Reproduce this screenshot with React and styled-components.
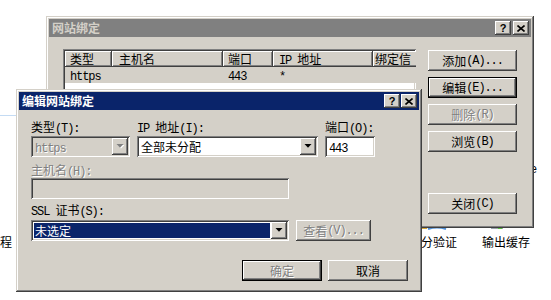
import React from "react";
import styled, { createGlobalStyle } from "styled-components";

const GlobalStyle = createGlobalStyle`
  html, body { margin: 0; padding: 0; background: #fff; }
  body {
    font-family: "Noto Sans CJK SC", "Liberation Sans", sans-serif;
    font-size: 12px;
    color: #000;
  }
`;

const raised =
  "inset -1px -1px #404040, inset 1px 1px #ffffff, inset -2px -2px #808080, inset 2px 2px #d4d0c8";
const sunken =
  "inset 1px 1px #808080, inset -1px -1px #ffffff, inset 2px 2px #404040, inset -2px -2px #d4d0c8";

const Desktop = styled.div`
  position: relative;
  width: 551px;
  height: 300px;
  overflow: hidden;
  background: #fff;
`;

const BgLabel = styled.div`
  position: absolute;
  left: ${p => p.$x}px;
  top: ${p => p.$y}px;
  font-size: 12px;
  line-height: 14px;
  white-space: nowrap;
`;

const BgRule = styled.div`
  position: absolute;
  left: 0;
  top: 115px;
  width: 16px;
  height: 1px;
  background: #c4dbf3;
`;

const BgIcon = styled.svg`
  position: absolute;
  left: ${p => p.$x}px;
  top: ${p => p.$y}px;
`;

const Window = styled.div`
  position: absolute;
  left: ${p => p.$x}px;
  top: ${p => p.$y}px;
  width: ${p => p.$w}px;
  height: ${p => p.$h}px;
  box-sizing: border-box;
  padding: 3px;
  background: #d4d0c8;
  box-shadow: inset -1px -1px #404040, inset 1px 1px #d4d0c8, inset -2px -2px #808080, inset 2px 2px #ffffff;
  display: flex;
  flex-direction: column;
  overflow: hidden;
`;

const TitleBar = styled.div`
  flex: none;
  height: 18px;
  display: flex;
  align-items: center;
  justify-content: space-between;
  padding: 0 2px 0 3px;
  background: ${p => (p.$active ? "#0a246a" : "#808080")};
  color: ${p => (p.$active ? "#ffffff" : "#d4d0c8")};
  font-weight: bold;
  font-size: 12px;
  line-height: 18px;
`;

const TitleButtons = styled.div`
  display: flex;
  gap: ${p => p.$gap}px;
`;

const TitleButton = styled.div`
  width: 16px;
  height: 14px;
  box-sizing: border-box;
  background: #d4d0c8;
  color: #000;
  box-shadow: ${raised};
  display: flex;
  align-items: center;
  justify-content: center;
  font-family: "Liberation Sans", sans-serif;
  font-weight: bold;
  font-size: 11px;
  line-height: 14px;
`;

/* back dialog */
const BackBody = styled.div`
  display: flex;
  padding: 12px 0 0 14px;
  gap: 12px;
`;

const ListView = styled.div`
  width: 353px;
  height: 170px;
  box-sizing: border-box;
  padding: 2px;
  background: #fff;
  box-shadow: ${sunken};
  overflow: hidden;
`;

const ListGrid = styled.div`
  display: grid;
  grid-template-columns: 47px 111px 50px 100px 100px;
  width: 408px;
`;

const HeaderCell = styled.div`
  height: 16px;
  box-sizing: border-box;
  padding-left: ${p => p.$pad}px;
  line-height: 16px;
  background: #d4d0c8;
  box-shadow: inset -1px -1px #404040, inset 1px 1px #ffffff, inset -2px -2px #808080;
  white-space: nowrap;
  overflow: hidden;
`;

const RowCell = styled.div`
  height: 16px;
  padding-left: ${p => p.$pad}px;
  line-height: 16px;
  background: #d4d0c8;
  white-space: nowrap;
`;

const ButtonColumn = styled.div`
  display: flex;
  flex-direction: column;
  gap: 6px;
  padding-top: 1px;
`;

const Button = styled.div`
  width: ${p => p.$w}px;
  height: 21px;
  flex: none;
  box-sizing: border-box;
  margin-top: ${p => p.$mt || 0}px;
  display: flex;
  align-items: center;
  justify-content: center;
  background: #d4d0c8;
  box-shadow: ${p =>
    p.$default
      ? "inset 0 0 0 1px #000, inset -2px -2px #404040, inset 2px 2px #ffffff, inset -3px -3px #808080"
      : raised};
  color: ${p => (p.$disabled ? "#808080" : "#000")};
  text-shadow: ${p => (p.$disabled ? "1px 1px #ffffff" : "none")};
  line-height: 14px;
  white-space: nowrap;
`;

/* front dialog */
const FrontBody = styled.div`
  display: flex;
  flex-direction: column;
  padding: 10px 11px 0 12px;
`;

const FieldRow = styled.div`
  display: flex;
  gap: 7px;
  margin-top: ${p => p.$mt || 0}px;
  align-items: flex-end;
`;

const Field = styled.div`
  display: flex;
  flex-direction: column;
  gap: ${p => p.$gap ?? 2}px;
`;

const Label = styled.div`
  height: 14px;
  line-height: 14px;
  white-space: nowrap;
  color: ${p => (p.$disabled ? "#808080" : "#000")};
  text-shadow: ${p => (p.$disabled ? "1px 1px #ffffff" : "none")};
`;

const Box = styled.div`
  width: ${p => p.$w}px;
  height: 21px;
  box-sizing: border-box;
  padding: 2px;
  display: flex;
  background: ${p => (p.$disabled ? "#d4d0c8" : "#fff")};
  box-shadow: ${sunken};
`;

const Value = styled.div`
  flex: 1;
  min-width: 0;
  padding: ${p => (p.$selected ? "1px" : "0 0 0 2px")};
  line-height: 17px;
  white-space: nowrap;
  overflow: hidden;
  color: ${p => (p.$disabled ? "#808080" : "#000")};
  text-shadow: ${p => (p.$disabled ? "1px 1px #ffffff" : "none")};
`;

const Selection = styled.div`
  height: 15px;
  line-height: 15px;
  padding-left: 1px;
  background: #0a246a;
  color: #fff;
`;

const DropButton = styled.div`
  width: 16px;
  height: 17px;
  flex: none;
  box-sizing: border-box;
  background: #d4d0c8;
  box-shadow: ${raised};
  display: flex;
  align-items: center;
  justify-content: center;
`;

const Actions = styled.div`
  display: flex;
  justify-content: flex-end;
  gap: 6px;
  margin-top: 19px;
`;

const Lat = styled.span`
  font-family: "Liberation Mono", monospace;
  font-size: 12px;
  letter-spacing: -1.1px;
`;

function Txt({ children }) {
  const parts = String(children).split(/([\u0000-\u00ff]+)/);
  return parts.map((p, i) =>
    p === "" ? null : /^[\u0000-\u00ff]+$/.test(p) ? (
      <Lat key={i}>{p}</Lat>
    ) : (
      <React.Fragment key={i}>{p}</React.Fragment>
    )
  );
}

const Arrow = ({ disabled }) => (
  <svg width="8" height="5" viewBox="0 0 8 5">
    {disabled && <polygon points="1.5,1 8.5,1 5,4.5" fill="#fff" />}
    <polygon points="0.5,0 7.5,0 4,3.8" fill={disabled ? "#808080" : "#000"} />
  </svg>
);

const CloseGlyph = () => (
  <svg width="8" height="7" viewBox="0 0 8 7">
    <path d="M0.5 0.5 L7.5 6.5 M7.5 0.5 L0.5 6.5" stroke="#000" strokeWidth="1.6" />
  </svg>
);

const Combo = ({ w, value, disabled, selected }) => (
  <Box $w={w} $disabled={disabled}>
    <Value $disabled={disabled} $selected={selected}>
      {selected ? <Selection><Txt>{value}</Txt></Selection> : <Txt>{value}</Txt>}
    </Value>
    <DropButton>
      <Arrow disabled={disabled} />
    </DropButton>
  </Box>
);

const columns = [
  { title: "类型", pad: 5, cell: "https" },
  { title: "主机名", pad: 7, cell: "" },
  { title: "端口", pad: 5, cell: "443" },
  { title: "IP 地址", pad: 6, cell: "*" },
  { title: "绑定信", pad: 2, cell: "" },
];

export default function App() {
  return (
    <>
      <GlobalStyle />
      <Desktop>
        <BgRule />
        <BgLabel $x={0} $y={235}>程</BgLabel>
        <BgLabel $x={530} $y={161}><Txt>e</Txt></BgLabel>
        <BgIcon $x={420} $y={220} width="28" height="12">
          <rect x="1" y="4" width="6" height="5" fill="#d8a93a" />
          <path d="M8 9 Q17 6 26 9" stroke="#4f8fd6" strokeWidth="2" fill="none" />
        </BgIcon>
        <BgIcon $x={488} $y={220} width="20" height="12">
          <rect x="3" y="5" width="12" height="4" fill="#9aa3ad" />
          <rect x="10" y="6" width="4" height="3" fill="#5cbf3a" />
        </BgIcon>
        <BgLabel $x={421} $y={235}>分验证</BgLabel>
        <BgLabel $x={482} $y={235}>输出缓存</BgLabel>

        <Window $x={46} $y={16} $w={488} $h={212}>
          <TitleBar>
            <span>网站绑定</span>
            <TitleButtons $gap={2}>
              <TitleButton>?</TitleButton>
              <TitleButton><CloseGlyph /></TitleButton>
            </TitleButtons>
          </TitleBar>
          <BackBody>
            <ListView>
              <ListGrid>
                {columns.map(c => (
                  <HeaderCell key={c.title} $pad={c.pad}><Txt>{c.title}</Txt></HeaderCell>
                ))}
                {columns.map(c => (
                  <RowCell key={c.title} $pad={c.pad}><Txt>{c.cell}</Txt></RowCell>
                ))}
              </ListGrid>
            </ListView>
            <ButtonColumn>
              <Button $w={89}><Txt>添加(A)...</Txt></Button>
              <Button $w={89} $default><Txt>编辑(E)...</Txt></Button>
              <Button $w={89} $disabled><Txt>删除(R)</Txt></Button>
              <Button $w={89}><Txt>浏览(B)</Txt></Button>
              <Button $w={89} $mt={35}><Txt>关闭(C)</Txt></Button>
            </ButtonColumn>
          </BackBody>
        </Window>

        <Window $x={16} $y={89} $w={406} $h={203}>
          <TitleBar $active>
            <span>编辑网站绑定</span>
            <TitleButtons $gap={1}>
              <TitleButton>?</TitleButton>
              <TitleButton><CloseGlyph /></TitleButton>
            </TitleButtons>
          </TitleBar>
          <FrontBody>
            <FieldRow>
              <Field>
                <Label><Txt>类型(T):</Txt></Label>
                <Combo w={99} value="https" disabled />
              </Field>
              <Field>
                <Label><Txt>IP 地址(I):</Txt></Label>
                <Combo w={181} value="全部未分配" />
              </Field>
              <Field>
                <Label><Txt>端口(O):</Txt></Label>
                <Box $w={50}>
                  <Value><Txt>443</Txt></Value>
                </Box>
              </Field>
            </FieldRow>
            <FieldRow $mt={6}>
              <Field $gap={1}>
                <Label $disabled><Txt>主机名(H):</Txt></Label>
                <Box $w={258} $disabled />
              </Field>
            </FieldRow>
            <FieldRow $mt={4}>
              <Field $gap={3}>
                <Label><Txt>SSL 证书(S):</Txt></Label>
                <Combo w={258} value="未选定" selected />
              </Field>
              <Button $w={75} $disabled><Txt>查看(V)...</Txt></Button>
            </FieldRow>
            <Actions>
              <Button $w={80} $default $disabled>确定</Button>
              <Button $w={80}>取消</Button>
            </Actions>
          </FrontBody>
        </Window>
      </Desktop>
    </>
  );
}
